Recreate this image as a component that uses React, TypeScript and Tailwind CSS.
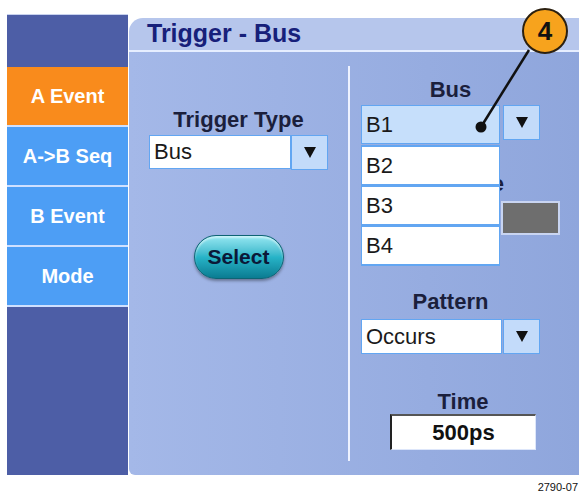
import React from "react";

const FONT = { fontFamily: '"Liberation Sans", Arial, sans-serif' };

function Arrow() {
  return (
    <svg width="12" height="11" viewBox="0 0 12 11">
      <polygon points="0,0 12,0 6,11" fill="#111" />
    </svg>
  );
}

function Dropdown({ text, w, h }: { text: string; w: number; h: number }) {
  return (
    <div className="flex items-start">
      <div
        className="flex items-center border border-[#62a6f2] bg-white pl-[4px] text-[22px] leading-none text-[#1a1a1a]"
        style={{ width: w, height: h }}
      >
        {text}
      </div>
      <div className="flex h-[35px] w-[37px] items-center justify-center border border-[#62a6f2] bg-[#c3dbfa]">
        <Arrow />
      </div>
    </div>
  );
}

const tabs = ["A->B Seq", "B Event", "Mode"];

export default function App() {
  return (
    <div className="relative h-[494px] w-[579px] overflow-hidden bg-white" style={FONT}>
      <div className="pl-[7px] pt-[14px]">
        <div className="flex h-[461px]">
          {/* left tab column */}
          <div className="flex w-[121px] flex-col border-t border-[#c8d2ee] bg-[#4d5ea6]">
            <div className="h-[52px]" />
            <div className="flex h-[58px] items-center justify-center bg-[#f98b1c] text-[20px] font-bold text-white">
              A Event
            </div>
            {tabs.map((t) => (
              <div key={t} className="border-t-2 border-[#cfe0ff]">
                <div className="flex h-[58px] items-center justify-center bg-[#4d9ef5] text-[20px] font-bold text-white">
                  {t}
                </div>
              </div>
            ))}
            <div className="h-[2px] bg-[#cfe0ff]" />
          </div>

          {/* panel */}
          <div className="ml-[1px] mt-[4px] flex flex-1 flex-col overflow-hidden rounded-bl-[6px] rounded-tl-[14px]">
            <div className="flex h-[34px] items-center border-b-2 border-[#e6eeff] bg-[#b6c6ec] pl-[18px] text-[25px] font-bold text-[#17207a]">
              Trigger - Bus
            </div>
            <div className="flex flex-1 bg-linear-to-r from-[#a4b8e8] to-[#8fa6dc]">
              {/* left col */}
              <div className="flex w-[219px] flex-col items-center pt-[58px]">
                <div className="text-[22px] font-bold leading-[20px] text-[#1b1f3c]">Trigger Type</div>
                <div className="mt-[5px]">
                  <Dropdown text="Bus" w={142} h={34} />
                </div>
                <div className="mt-[65px] flex h-[44px] w-[90px] items-center justify-center rounded-full border border-[#0e6474] bg-linear-to-b from-[#94e8f2] via-[#27b4c8] to-[#0a7c92] text-[21px] font-bold text-[#0b1838] shadow-[0_2px_3px_rgba(0,0,0,0.35),inset_0_2px_2px_rgba(255,255,255,0.5)]">
                  Select
                </div>
              </div>

              {/* divider */}
              <div className="my-[14px] w-[2px] bg-[#eef2ff]" />

              {/* right col */}
              <div className="flex flex-col pl-[11px] pt-[28px]">
                <div className="w-[179px] text-center text-[22px] font-bold leading-[20px] text-[#1b1f3c]">Bus</div>
                <div className="relative mt-[5px]">
                  <div className="flex items-start gap-[3px]">
                    <div className="flex h-[39px] w-[139px] items-center border border-[#62a6f2] bg-[#c6dffb] pl-[4px] text-[22px] leading-none text-[#1a1a1a]">
                      B1
                    </div>
                    <div className="flex h-[35px] w-[37px] items-center justify-center border border-[#62a6f2] bg-[#c3dbfa]">
                      <Arrow />
                    </div>
                  </div>
                  <div className="mt-[30px] h-[20px] w-[143px] text-right text-[22px] font-bold leading-[20px] text-[#1b1f3c]">
                    Source Type
                  </div>
                  <div className="ml-[140px] mt-[7px] h-[34px] w-[59px] border-2 border-[#c9d5f2] bg-[#6e6e6e]" />
                  <div className="absolute left-0 top-[40px] z-10 flex w-[139px] flex-col">
                    {["B2", "B3", "B4"].map((b) => (
                      <div
                        key={b}
                        className="-mt-[1px] flex h-[41px] items-center border-x border-y-2 border-[#62a6f2] bg-white pl-[4px] text-[22px] leading-none text-[#1a1a1a] first:mt-0"
                      >
                        {b}
                      </div>
                    ))}
                  </div>
                </div>
                <div className="mt-[57px] w-[179px] text-center text-[22px] font-bold leading-[20px] text-[#1b1f3c]">Pattern</div>
                <div className="mt-[7px] flex items-start">
                  <div className="flex h-[35px] w-[141px] items-center border border-[#62a6f2] bg-white pl-[4px] text-[22px] leading-none text-[#1a1a1a]">
                    Occurs
                  </div>
                  <div className="ml-[1px] flex h-[35px] w-[37px] items-center justify-center border border-[#62a6f2] bg-[#c3dbfa]">
                    <Arrow />
                  </div>
                </div>
                <div className="ml-[29px] mt-[38px] flex w-[146px] flex-col items-center">
                  <div className="text-[22px] font-bold leading-[20px] text-[#1b1f3c]">Time</div>
                  <div className="mt-[2px] flex h-[36px] w-[146px] items-center justify-center border-l-2 border-t-2 border-b border-r border-l-[#222] border-t-[#555] border-b-[#dde6fa] border-r-[#dde6fa] bg-white text-[22px] font-bold text-[#111]">
                    500ps
                  </div>
                </div>
              </div>
            </div>
          </div>
        </div>
        <div className="mt-[6px] pr-[1px] text-right text-[11px] leading-[12px] text-[#111]">2790-07</div>
      </div>

      {/* callout */}
      <svg className="pointer-events-none absolute left-0 top-0 z-20" width="579" height="494">
        <line x1="529" y1="50" x2="481" y2="127" stroke="#111" strokeWidth="2.5" />
        <circle cx="481" cy="127" r="5.5" fill="#111" />
        <circle cx="545" cy="31" r="22" fill="#f7a31d" stroke="#2b2010" strokeWidth="2" />
      </svg>
      <div className="pointer-events-none absolute left-[523px] top-[9px] z-30 flex h-[44px] w-[44px] items-center justify-center text-[26px] font-bold text-[#111]">
        4
      </div>
    </div>
  );
}
